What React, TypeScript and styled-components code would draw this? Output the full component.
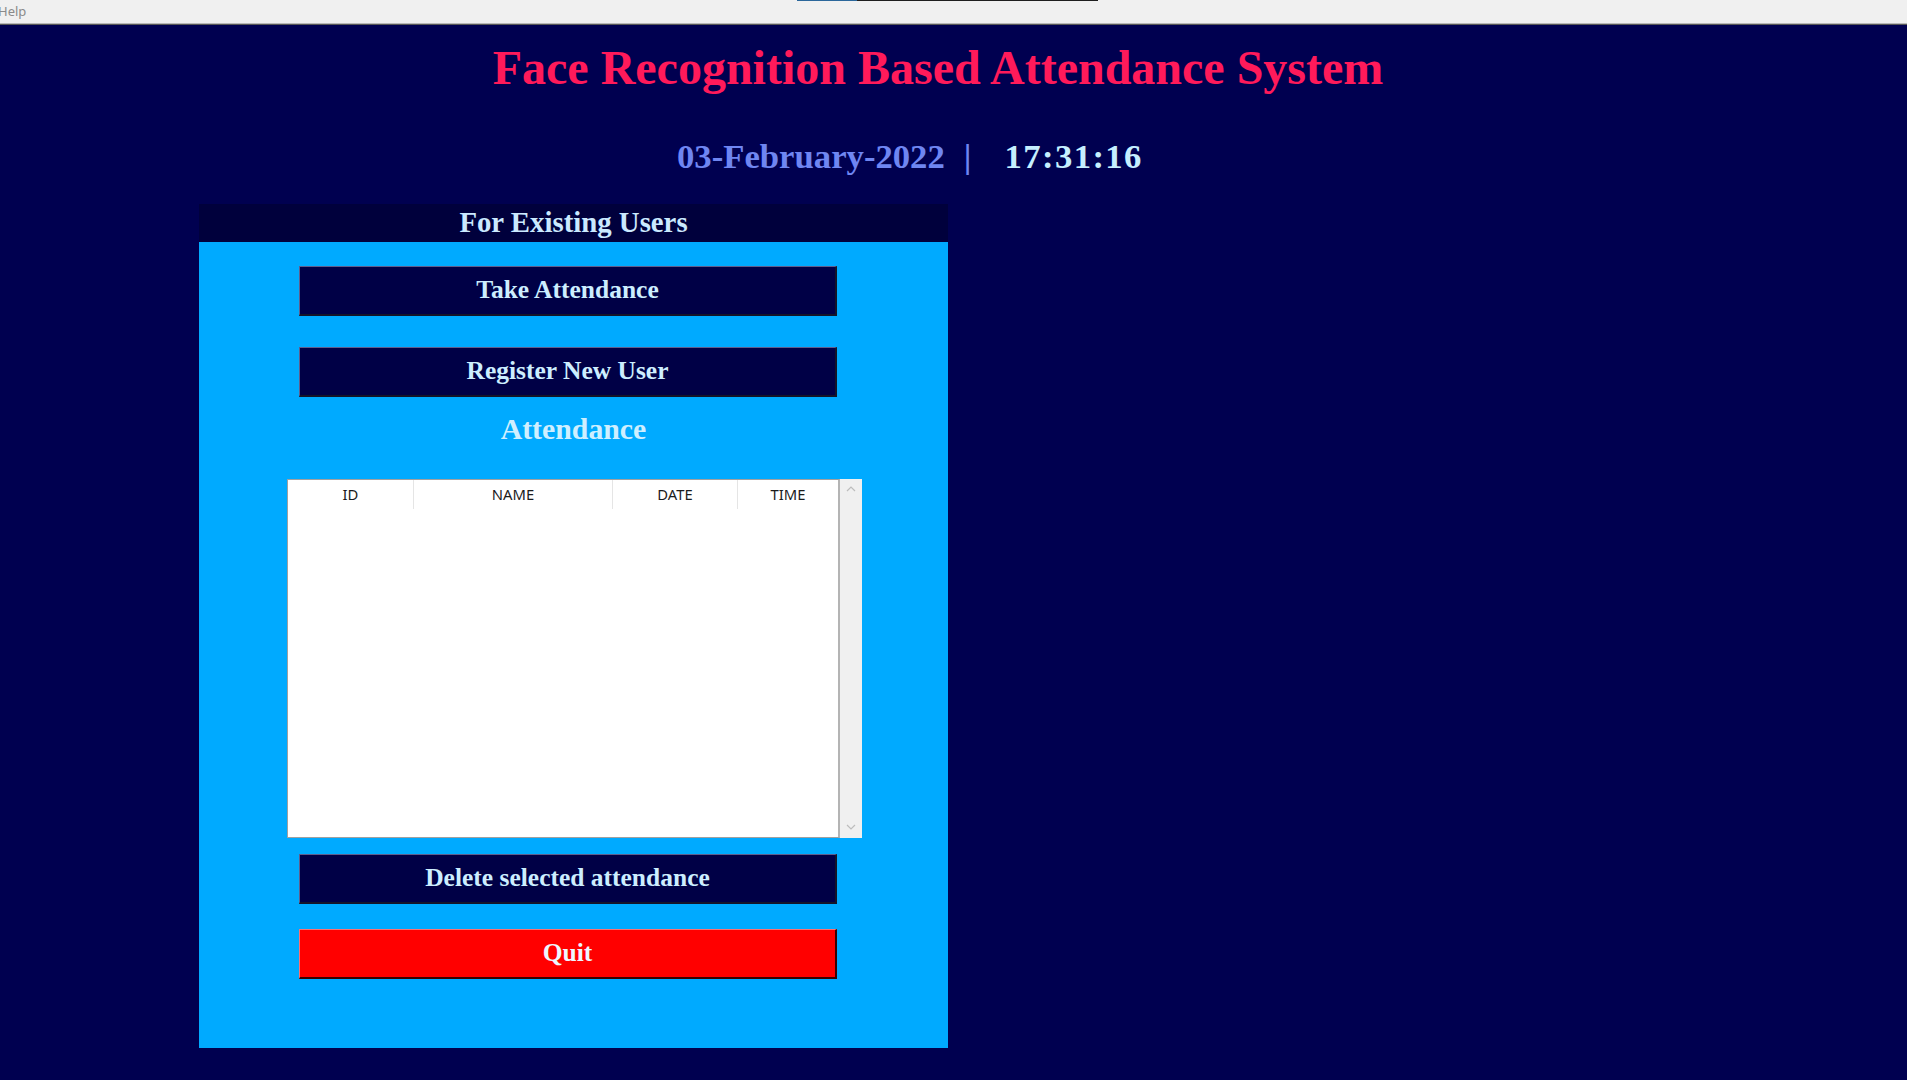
import React from "react";
import styled, { createGlobalStyle } from "styled-components";

const GlobalStyle = createGlobalStyle`
  html, body {
    margin: 0;
    padding: 0;
    background: #000050;
    overflow: hidden;
  }
  * { box-sizing: border-box; }
`;

const serif = `"Liberation Serif", "Times New Roman", serif`;
const sans = `"Noto Sans", "Open Sans", sans-serif`;

const Page = styled.div`
  width: 1907px;
  height: 1080px;
  background: #000050;
  display: flex;
  flex-direction: column;
`;

const MenuBar = styled.div`
  height: 23px;
  background: #f0f0f0;
  display: flex;
  flex-direction: column;
`;

const TopStrip = styled.div`
  height: 1px;
  display: flex;
  padding-left: 797px;
`;

const StripSeg = styled.div<{ $color: string; $w: number }>`
  width: ${(p) => p.$w}px;
  height: 1px;
  background: ${(p) => p.$color};
`;

const MenuItem = styled.div`
  font-family: ${sans};
  font-size: 13px;
  line-height: 21px;
  color: #8a8a8a;
  margin-left: -2px;
`;

const MenuRule = styled.div`
  height: 2px;
  border-top: 1px solid #b9b9b9;
  border-bottom: 1px solid #575757;
`;

const Title = styled.h1`
  margin: 19px 0 0 0;
  padding-right: 31px;
  text-align: center;
  font-family: ${serif};
  font-weight: bold;
  font-size: 48px;
  line-height: 48px;
  color: #ff1a5a;
  white-space: nowrap;
`;

const DateRow = styled.div`
  margin-top: 48px;
  padding-left: 677px;
  display: flex;
  align-items: baseline;
  font-family: ${serif};
  font-weight: bold;
  font-size: 34.7px;
  line-height: 34.7px;
  white-space: nowrap;
`;

const DateText = styled.span`
  color: #6f86f2;
`;

const Separator = styled.span`
  color: #6f86f2;
  margin-left: 19px;
`;

const TimeText = styled.span`
  color: #c6efff;
  margin-left: 33px;
  letter-spacing: 1.4px;
`;

const Panel = styled.section`
  margin-top: 29px;
  margin-left: 199px;
  width: 749px;
  display: flex;
  flex-direction: column;
`;

const PanelHeader = styled.div`
  height: 38px;
  background: #00003c;
  color: #cbe9ff;
  font-family: ${serif};
  font-weight: bold;
  font-size: 28.8px;
  display: flex;
  align-items: center;
  justify-content: center;
`;

const PanelBody = styled.div`
  height: 806px;
  background: #00aaff;
  padding-top: 24px;
  display: flex;
  flex-direction: column;
  align-items: flex-start;
`;

const ActionButton = styled.button<{ $danger?: boolean; $gap?: number }>`
  margin: ${(p) => p.$gap ?? 0}px 0 0 100px;
  width: 538px;
  height: 50px;
  padding: 0 0 0 0;
  border-style: solid;
  border-width: 1px 2px 2px 1px;
  border-color: ${(p) =>
    p.$danger
      ? "#ff7070 #3a0000 #3a0000 #ff7070"
      : "#5e5e8e #14142a #14142a #5e5e8e"};
  background: ${(p) => (p.$danger ? "#ff0000" : "#000046")};
  color: ${(p) => (p.$danger ? "#eef6ff" : "#cdeeff")};
  font-family: ${serif};
  font-weight: bold;
  font-size: 25.5px;
  display: flex;
  align-items: center;
  justify-content: center;
  cursor: pointer;
`;

const SectionLabel = styled.div`
  margin-top: 17px;
  width: 100%;
  text-align: center;
  font-family: ${serif};
  font-weight: bold;
  font-size: 29.8px;
  line-height: 29px;
  color: #cfefff;
`;

const TableWrap = styled.div`
  margin: 36px 0 0 88px;
  height: 359px;
  display: flex;
`;

const TableBox = styled.div`
  width: 553px;
  height: 100%;
  background: #ffffff;
  border: 1px solid #a0a0a0;
  border-right-width: 2px;
  border-right-color: #b4b4b4;
  display: flex;
  flex-direction: column;
`;

const HeaderRow = styled.div`
  height: 29px;
  display: grid;
  grid-template-columns: 125px 199px 125px 1fr;
`;

const HeaderCell = styled.div<{ $first?: boolean }>`
  display: flex;
  align-items: center;
  justify-content: center;
  padding-bottom: 1px;
  font-family: ${sans};
  font-size: 14.8px;
  color: #1b1b1b;
  border-left: ${(p) => (p.$first ? "none" : "1px solid #e5e5e5")};
`;

const ScrollBar = styled.div`
  width: 22px;
  height: 100%;
  background: #f0f0f0;
  display: flex;
  flex-direction: column;
  justify-content: space-between;
  align-items: center;
  padding: 7px 0 8px;
`;

const Chevron = ({ down }: { down?: boolean }) => (
  <svg width="10" height="6" viewBox="0 0 10 6">
    <polyline
      points={down ? "1,1 5,5 9,1" : "1,5 5,1 9,5"}
      fill="none"
      stroke="#bdbdbd"
      strokeWidth="1.2"
    />
  </svg>
);

export default function App() {
  return (
    <Page>
      <GlobalStyle />
      <MenuBar>
        <TopStrip>
          <StripSeg $color="#2b679b" $w={60} />
          <StripSeg $color="#1e1e1e" $w={241} />
        </TopStrip>
        <MenuItem>Help</MenuItem>
      </MenuBar>
      <MenuRule />
      <Title>Face Recognition Based Attendance System</Title>
      <DateRow>
        <DateText>03-February-2022</DateText>
        <Separator>|</Separator>
        <TimeText>17:31:16</TimeText>
      </DateRow>
      <Panel>
        <PanelHeader>For Existing Users</PanelHeader>
        <PanelBody>
          <ActionButton>Take Attendance</ActionButton>
          <ActionButton $gap={31}>Register New User</ActionButton>
          <SectionLabel>Attendance</SectionLabel>
          <TableWrap>
            <TableBox>
              <HeaderRow>
                <HeaderCell $first>ID</HeaderCell>
                <HeaderCell>NAME</HeaderCell>
                <HeaderCell>DATE</HeaderCell>
                <HeaderCell>TIME</HeaderCell>
              </HeaderRow>
            </TableBox>
            <ScrollBar>
              <Chevron />
              <Chevron down />
            </ScrollBar>
          </TableWrap>
          <ActionButton $gap={16}>Delete selected attendance</ActionButton>
          <ActionButton $gap={25} $danger>
            Quit
          </ActionButton>
        </PanelBody>
      </Panel>
    </Page>
  );
}
